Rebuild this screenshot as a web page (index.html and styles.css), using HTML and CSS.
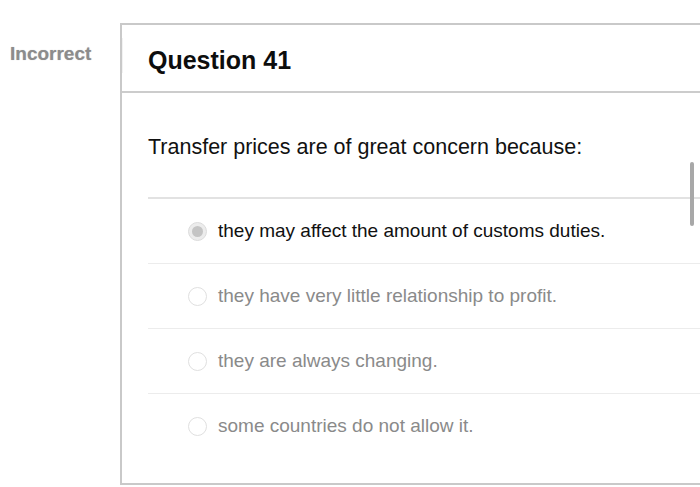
FILE: index.html
```html
<!DOCTYPE html>
<html lang="en">
<head>
<meta charset="utf-8">
<title>Question 41</title>
<link rel="stylesheet" href="styles.css">
</head>
<body>
<div class="page">
  <div class="status">Incorrect</div>
  <div class="card">
    <div class="card-header">Question 41</div>
    <div class="card-body">
      <div class="question">Transfer prices are of great concern because:</div>
      <div class="options">
        <div class="option selected"><span class="radio"></span><span class="label">they may affect the amount of customs duties.</span></div>
        <div class="option"><span class="radio"></span><span class="label">they have very little relationship to profit.</span></div>
        <div class="option"><span class="radio"></span><span class="label">they are always changing.</span></div>
        <div class="option"><span class="radio"></span><span class="label">some countries do not allow it.</span></div>
      </div>
    </div>
    <div class="scrollbar"></div>
  </div>
</div>
</body>
</html>
```
FILE: styles.css
```css
html, body {
  margin: 0;
  padding: 0;
  background: #ffffff;
  overflow: hidden;
}
body {
  font-family: "Liberation Sans", Arial, Helvetica, sans-serif;
  color: #111;
}
.page {
  display: flex;
  align-items: flex-start;
  padding-top: 23px;
  width: 700px;
}
.status {
  flex: 0 0 110px;
  padding: 20px 0 0 10px;
  font-size: 19px;
  font-weight: bold;
  color: #8c8c8c;
  text-shadow: 0 0 1px #bdbdbd;
}
.card {
  position: relative;
  flex: 1 1 auto;
  min-width: 0;
  height: 458px;
  border: 2px solid #c9c9c9;
  border-right: none;
  background: #fff;
  overflow: hidden;
}
.card::before {
  content: "";
  position: absolute;
  left: 0;
  top: 13px;
  width: 1px;
  height: 35px;
  background: #f2f2f2;
}
.card-header {
  height: 62px;
  padding-top: 4px;
  border-bottom: 2px solid #cccccc;
  display: flex;
  align-items: center;
  padding-left: 26px;
  font-size: 25px;
  font-weight: bold;
  color: #0d0d0d;
}
.card-body {
  padding-left: 26px;
}
.question {
  padding: 41px 0 37px 0;
  font-size: 21.5px;
  line-height: 26px;
  color: #111;
  border-bottom: 2px solid #e2e2e2;
}
.option {
  display: flex;
  align-items: center;
  gap: 11px;
  height: 64px;
  padding-left: 40px;
  border-bottom: 1px solid #ececec;
  font-size: 19px;
  color: #8a8a8a;
}
.option:last-child {
  border-bottom: none;
}
.option.selected {
  color: #111;
}
.radio {
  box-sizing: border-box;
  width: 19px;
  height: 19px;
  border-radius: 50%;
  border: 1px solid #e0e0e0;
  background: #fff;
  flex: 0 0 19px;
  display: flex;
  align-items: center;
  justify-content: center;
}
.option.selected .radio {
  background: #ececec;
  border-color: #dcdcdc;
}
.option.selected .radio::after {
  content: "";
  width: 11px;
  height: 11px;
  border-radius: 50%;
  background: #c4c4c4;
}
.scrollbar {
  position: absolute;
  left: 568px;
  top: 137px;
  width: 4px;
  height: 64px;
  border-radius: 2px;
  background: #a8a8a8;
}
```
